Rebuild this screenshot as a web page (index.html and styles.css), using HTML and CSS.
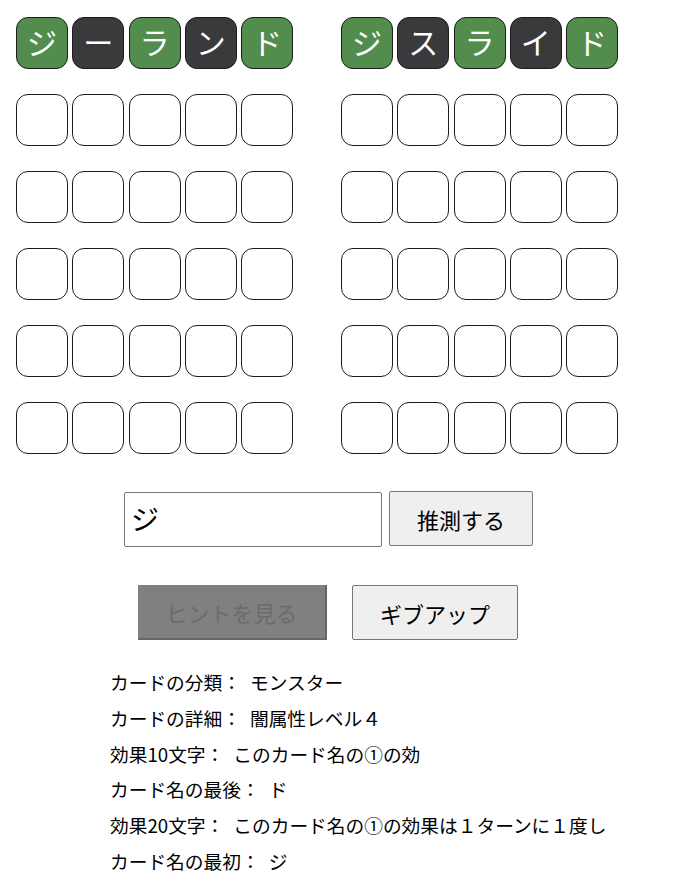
FILE: index.html
```html
<!DOCTYPE html>
<html lang="ja">
<head>
<meta charset="utf-8">
<title>カード名当て</title>
<link rel="stylesheet" href="styles.css">
</head>
<body>
<div class="boards">
  <div class="board">
    <div class="tile green">ジ</div><div class="tile dark">ー</div><div class="tile green">ラ</div><div class="tile dark">ン</div><div class="tile green">ド</div>
    <div class="tile"></div><div class="tile"></div><div class="tile"></div><div class="tile"></div><div class="tile"></div>
    <div class="tile"></div><div class="tile"></div><div class="tile"></div><div class="tile"></div><div class="tile"></div>
    <div class="tile"></div><div class="tile"></div><div class="tile"></div><div class="tile"></div><div class="tile"></div>
    <div class="tile"></div><div class="tile"></div><div class="tile"></div><div class="tile"></div><div class="tile"></div>
    <div class="tile"></div><div class="tile"></div><div class="tile"></div><div class="tile"></div><div class="tile"></div>
  </div>
  <div class="board">
    <div class="tile green">ジ</div><div class="tile dark">ス</div><div class="tile green">ラ</div><div class="tile dark">イ</div><div class="tile green">ド</div>
    <div class="tile"></div><div class="tile"></div><div class="tile"></div><div class="tile"></div><div class="tile"></div>
    <div class="tile"></div><div class="tile"></div><div class="tile"></div><div class="tile"></div><div class="tile"></div>
    <div class="tile"></div><div class="tile"></div><div class="tile"></div><div class="tile"></div><div class="tile"></div>
    <div class="tile"></div><div class="tile"></div><div class="tile"></div><div class="tile"></div><div class="tile"></div>
    <div class="tile"></div><div class="tile"></div><div class="tile"></div><div class="tile"></div><div class="tile"></div>
  </div>
</div>
<div class="guess">
  <input class="guess-input" type="text" value="ジ">
  <button class="btn guess-btn">推測する</button>
</div>
<div class="actions">
  <button class="btn hint-btn" disabled>ヒントを見る</button>
  <button class="btn giveup-btn">ギブアップ</button>
</div>
<div class="info">
  <div class="line"><span class="label">カードの分類：</span><span class="value">モンスター</span></div>
  <div class="line"><span class="label">カードの詳細：</span><span class="value">闇属性レベル４</span></div>
  <div class="line"><span class="label">効果10文字：</span><span class="value">このカード名の①の効</span></div>
  <div class="line"><span class="label">カード名の最後：</span><span class="value">ド</span></div>
  <div class="line"><span class="label">効果20文字：</span><span class="value">このカード名の①の効果は１ターンに１度し</span></div>
  <div class="line"><span class="label">カード名の最初：</span><span class="value">ジ</span></div>
</div>
</body>
</html>
```

FILE: styles.css
```css
html, body {
  margin: 0;
  padding: 0;
  background: #ffffff;
}

body {
  font-family: "Noto Sans CJK JP", "Noto Sans", sans-serif;
  color: #000000;
}

.boards {
  display: flex;
  gap: 48px;
  padding: 17px 0 0 16px;
}

.board {
  display: grid;
  grid-template-columns: repeat(5, 52px);
  grid-auto-rows: 52px;
  column-gap: 4.25px;
  row-gap: 25px;
}

.tile {
  box-sizing: border-box;
  border: 1px solid #1c1c1c;
  border-radius: 12px;
  background: #ffffff;
  display: flex;
  align-items: center;
  justify-content: center;
  font-size: 30px;
  line-height: 1;
  color: #ffffff;
  padding-bottom: 4px;
}

.tile.green {
  background: #538d4e;
}

.tile.dark {
  background: #3a3a3c;
}

.guess {
  display: flex;
  align-items: flex-start;
  gap: 7px;
  margin: 37px 0 0 124px;
}

.guess-input {
  box-sizing: border-box;
  width: 258px;
  height: 55px;
  margin: 1px 0 0 0;
  padding: 0 6px 4px;
  border: 1px solid #767676;
  border-radius: 2px;
  font-family: "Noto Sans CJK JP", sans-serif;
  font-size: 28px;
  color: #000000;
  background: #ffffff;
  outline: none;
}

.btn {
  box-sizing: border-box;
  height: 55px;
  margin: 0;
  padding: 0;
  font-family: "Noto Sans CJK JP", sans-serif;
  font-size: 22px;
  line-height: 1;
  color: #000000;
  background: #efefef;
  border: 1px solid #767676;
  border-radius: 2px;
}

.guess-btn {
  width: 144px;
}

.actions {
  display: flex;
  gap: 25px;
  margin: 38px 0 0 138px;
}

.hint-btn {
  width: 189px;
  background: #808080;
  color: #6b6b6b;
  border-style: solid;
  border-width: 0 2px 2px 0;
  border-color: #666666;
  border-radius: 0;
}

.giveup-btn {
  width: 166px;
}

.info {
  margin-top: 24px;
  padding-left: 110px;
  font-size: 18.72px;
  line-height: 35.8px;
}

.line {
  white-space: nowrap;
}

.value {
  margin-left: 9px;
}
```
